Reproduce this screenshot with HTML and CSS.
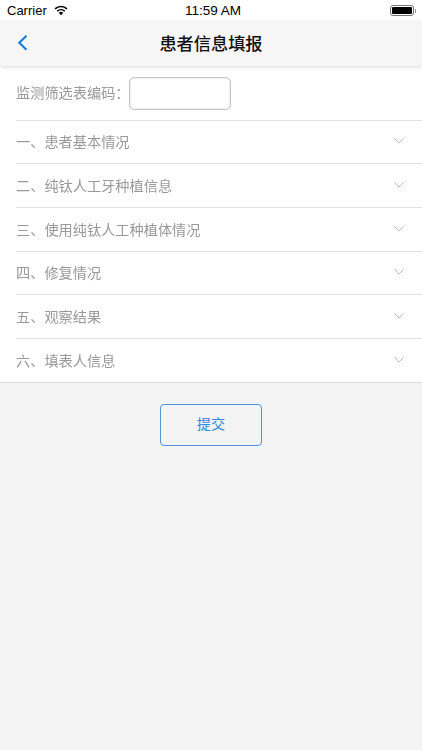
FILE: index.html
```html
<!DOCTYPE html>
<html lang="zh-CN">
<head>
    <meta charset="UTF-8">
    <meta name="viewport" content="width=device-width, initial-scale=1.0">
    <title>患者信息填报</title>
    <link rel="stylesheet" href="styles.css">
</head>
<body>
    <div class="status-bar">
        <div class="status-left">
            <span>Carrier</span>
            <svg class="wifi" width="14" height="11" viewBox="0 0 16 12">
                <path d="M8 11.5 L5.4 8.6 A3.8 3.8 0 0 1 10.6 8.6 Z" fill="#000"/>
                <path d="M3.7 6.8 A6.3 6.3 0 0 1 12.3 6.8" fill="none" stroke="#000" stroke-width="1.9"/>
                <path d="M1.2 4.2 A9.8 9.8 0 0 1 14.8 4.2" fill="none" stroke="#000" stroke-width="1.9"/>
            </svg>
        </div>
        <div class="status-time">11:59 AM</div>
        <div class="battery">
            <div class="battery-body"><div class="battery-fill"></div></div>
            <div class="battery-cap"></div>
        </div>
    </div>

    <header class="nav-bar">
        <svg class="back" width="12" height="18" viewBox="0 0 12 18">
            <path d="M9.5 1.8 L2.3 8.8 L9.5 15.8" fill="none" stroke="#1a7fe0" stroke-width="2.2"/>
        </svg>
        <h1>患者信息填报</h1>
    </header>

    <div class="form">
        <div class="code-row">
            <label for="code">监测筛选表编码：</label>
            <input id="code" type="text">
        </div>
        <div class="section">
            <span>一、患者基本情况</span>
            <svg class="chevron" width="10" height="6" viewBox="0 0 10 6"><path d="M0.5 0.5 L5 5 L9.5 0.5" fill="none" stroke="#bdbdbd" stroke-width="1"/></svg>
        </div>
        <div class="section">
            <span>二、纯钛人工牙种植信息</span>
            <svg class="chevron" width="10" height="6" viewBox="0 0 10 6"><path d="M0.5 0.5 L5 5 L9.5 0.5" fill="none" stroke="#bdbdbd" stroke-width="1"/></svg>
        </div>
        <div class="section">
            <span>三、使用纯钛人工种植体情况</span>
            <svg class="chevron" width="10" height="6" viewBox="0 0 10 6"><path d="M0.5 0.5 L5 5 L9.5 0.5" fill="none" stroke="#bdbdbd" stroke-width="1"/></svg>
        </div>
        <div class="section">
            <span>四、修复情况</span>
            <svg class="chevron" width="10" height="6" viewBox="0 0 10 6"><path d="M0.5 0.5 L5 5 L9.5 0.5" fill="none" stroke="#bdbdbd" stroke-width="1"/></svg>
        </div>
        <div class="section">
            <span>五、观察结果</span>
            <svg class="chevron" width="10" height="6" viewBox="0 0 10 6"><path d="M0.5 0.5 L5 5 L9.5 0.5" fill="none" stroke="#bdbdbd" stroke-width="1"/></svg>
        </div>
        <div class="section last">
            <span>六、填表人信息</span>
            <svg class="chevron" width="10" height="6" viewBox="0 0 10 6"><path d="M0.5 0.5 L5 5 L9.5 0.5" fill="none" stroke="#bdbdbd" stroke-width="1"/></svg>
        </div>
    </div>

    <div class="actions">
        <button class="submit">提交</button>
    </div>
</body>
</html>
```

FILE: styles.css
```css
html, body {
    height: 100%;
}
body {
    font-family: "Liberation Sans", "Noto Sans CJK SC", sans-serif;
    margin: 0;
    display: flex;
    flex-direction: column;
    background-color: #f4f4f5;
    overflow: hidden;
}
.status-bar {
    height: 21px;
    background-color: #fff;
    display: flex;
    align-items: center;
    justify-content: space-between;
    padding: 0 6px 0 7px;
    font-size: 13px;
    color: #000;
    position: relative;
}
.status-left {
    display: flex;
    align-items: center;
    gap: 7px;
}
.status-time {
    position: absolute;
    left: 4px;
    right: 0;
    text-align: center;
    font-size: 13.5px;
    font-weight: 500;
}
.battery {
    display: flex;
    align-items: center;
}
.battery-body {
    width: 24px;
    height: 11px;
    box-sizing: border-box;
    border: 1px solid #777;
    border-radius: 3px;
    padding: 1px;
}
.battery-fill {
    height: 100%;
    background-color: #000;
    border-radius: 1px;
}
.battery-cap {
    width: 1px;
    height: 4px;
    margin-left: 1px;
    background-color: #999;
}
.nav-bar {
    height: 45px;
    box-sizing: border-box;
    padding-bottom: 3px;
    background-color: #f6f6f6;
    display: flex;
    align-items: center;
    justify-content: center;
    position: relative;
    box-shadow: 0 1px 4px rgba(0, 0, 0, 0.16);
    z-index: 1;
}
.nav-bar h1 {
    margin: 0;
    font-size: 17.2px;
    font-weight: 500;
    color: #111;
}
.back {
    position: absolute;
    left: 17px;
    top: 13px;
}
.form {
    background-color: #fff;
    padding-left: 16px;
    border-bottom: 1px solid #ddd;
}
.code-row {
    height: 54.6px;
    box-sizing: border-box;
    display: flex;
    align-items: center;
    border-bottom: 1px solid #e2e2e2;
    font-size: 14.2px;
    color: #999;
}
.code-row label {
    width: 113px;
    flex-shrink: 0;
    white-space: nowrap;
    padding-bottom: 2px;
    will-change: transform;
}
.code-row input {
    width: 102px;
    height: 33px;
    margin-top: 2px;
    box-sizing: border-box;
    border: 1px solid #c4c4c4;
    border-radius: 5px;
    box-shadow: inset 0 0 2px #ccc;
    background-color: #fff;
}
.section {
    height: 43.67px;
    box-sizing: border-box;
    padding: 0 18px 1px 0;
    display: flex;
    align-items: center;
    justify-content: space-between;
    border-bottom: 1px solid #e2e2e2;
    font-size: 14.2px;
    color: #999;
}
.section span {
    will-change: transform;
}
.section.last {
    height: 43.05px;
    border-bottom: none;
}
.actions {
    display: flex;
    justify-content: center;
    padding-top: 21px;
}
.submit {
    width: 102px;
    height: 42px;
    padding-bottom: 4px;
    border: 1.5px solid #4f94dc;
    border-radius: 4px;
    background-color: transparent;
    color: #2b87da;
    font-family: inherit;
    font-size: 14.2px;
    cursor: pointer;
}
```
